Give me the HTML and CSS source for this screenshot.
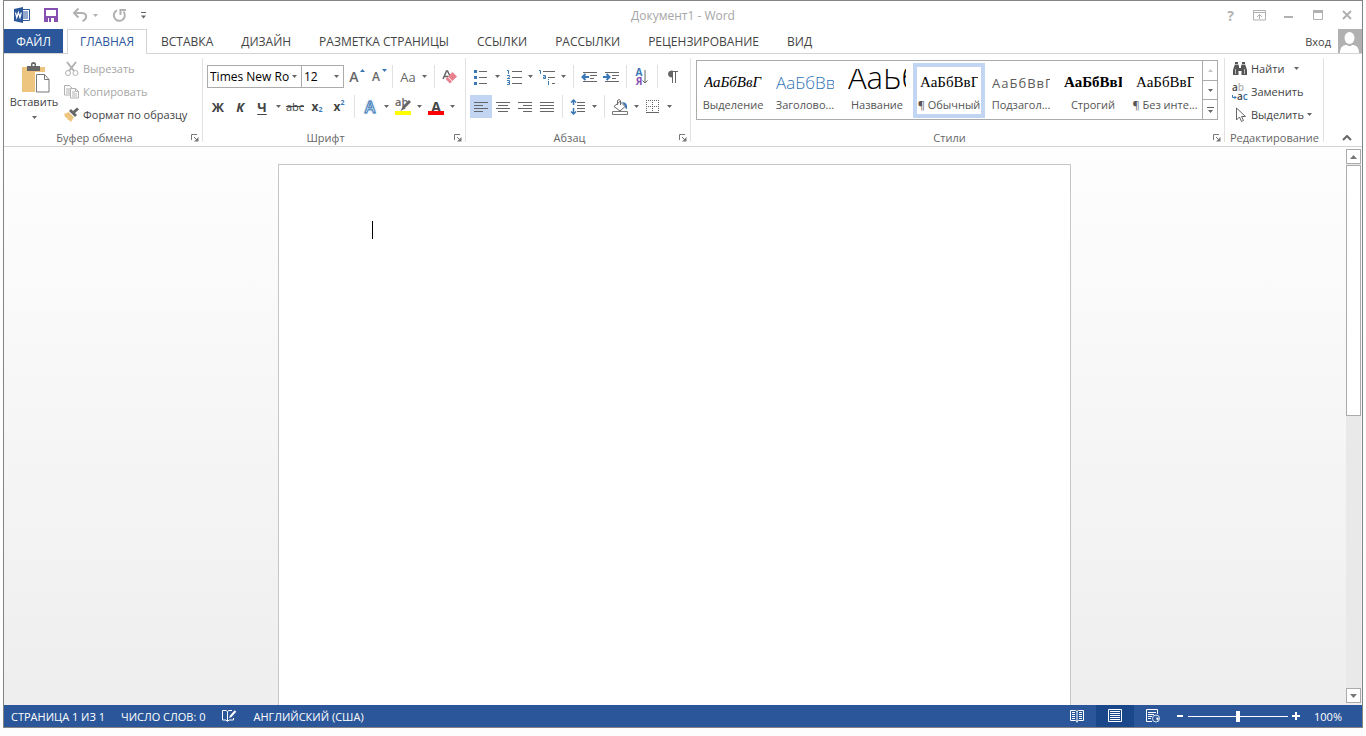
FILE: index.html
```html
<!DOCTYPE html>
<html lang="ru">

<head>
    <meta charset="UTF-8">
    <meta name="viewport" content="width=device-width, initial-scale=1.0">
    <title>Документ1 - Word</title>

    <link rel="stylesheet" href="styles.css">

</head>

<body>

    <!-- Shared shapes -->
    <svg class="defs" aria-hidden="true">
        <symbol id="arrow" viewBox="0 0 5 3"><path d="M0 0h5L2.500 3z" fill="currentColor" /></symbol>
        <symbol id="launcher" viewBox="0 0 8 8">
            <path d="M.5 6V.5H6M3 3l3 3" fill="none" stroke="currentColor" />
            <path d="M7.500 3v4.500H3z" fill="currentColor" />
        </symbol>
    </svg>

    <div class="window">

        <header class="titlebar">
            <div class="quick-access">
                <svg class="logo" viewBox="0 0 16 16" width="16" height="16">
                    <path d="M8.500 2.500h7v11h-7z" fill="#fff" stroke="#2b579a" />
                    <path d="M9 5h5M9 7h5M9 9h5M9 11h5" stroke="#2b579a" />
                    <path d="M0 2l9-2v16l-9-2z" fill="#2b579a" />
                    <path d="M1.500 5.500l1.300 5 1.600-5 1.600 5 1.300-5" fill="none" stroke="#fff" stroke-width="1.200" />
                </svg>
                <button class="qa-btn save" aria-label="Сохранить">
                    <svg viewBox="0 0 14 14" width="14" height="14">
                        <path d="M1 1h12v12H1z" fill="#fff" stroke="#8650b0" stroke-width="2" />
                        <path d="M1 8h12v5H1z" fill="#8650b0" />
                        <path d="M4 10h6v4H4z" fill="#fff" />
                        <path d="M5 10h2v4H5z" fill="#8650b0" />
                    </svg>
                </button>
                <button class="qa-btn undo" aria-label="Отменить">
                    <svg viewBox="0 0 16 14" width="16" height="14">
                        <path d="M6.500 .5L2 5l4.500 4.500M2 5h7.500c6 0 6 6 1 8" fill="none" stroke="#b1b1b1" stroke-width="2" />
                    </svg>
                    <svg class="arrow" width="5" height="3"><use href="#arrow" /></svg>
                </button>
                <button class="qa-btn redo" aria-label="Повторить">
                    <svg viewBox="0 0 15 15" width="15" height="15">
                        <path d="M5 2.300a5.500 5.500 0 1 0 6.500 1.400M8.500 7V2H14" fill="none" stroke="#b1b1b1" stroke-width="2" />
                    </svg>
                </button>
                <button class="qa-btn customize" aria-label="Настройка панели">
                    <svg viewBox="0 0 5 7" width="5" height="7">
                        <path d="M0 3.500h5L2.500 6.500z" fill="#666" />
                        <path d="M0 .5h5" stroke="#666" />
                    </svg>
                </button>
            </div>
            <h1 class="doc-title">Документ1 - Word</h1>
            <div class="window-buttons">
                <button class="help" aria-label="Справка">?</button>
                <button aria-label="Параметры ленты">
                    <svg viewBox="0 0 13 11" width="13" height="11">
                        <path d="M.5 .5h12v9.500H.5zM0 2.500h13M6.500 9V4.500M4 7l2.500-2.500L9 7" fill="none" stroke="#b1b1b1" />
                    </svg>
                </button>
                <button aria-label="Свернуть">
                    <svg viewBox="0 0 10 10" width="10" height="10"><path d="M0 7h9" stroke="#b1b1b1" stroke-width="2" /></svg>
                </button>
                <button aria-label="Развернуть">
                    <svg viewBox="0 0 10 10" width="10" height="10"><path d="M.5 1v8.500h9V1" fill="none" stroke="#b1b1b1" /><path d="M0 1.500h10" stroke="#b1b1b1" stroke-width="3" /></svg>
                </button>
                <button aria-label="Закрыть">
                    <svg viewBox="0 0 10 10" width="10" height="10"><path d="M1 1l8 8M9 1L1 9" stroke="#b1b1b1" stroke-width="2" /></svg>
                </button>
            </div>
        </header>

        <nav class="tabs">
            <button class="file-tab">ФАЙЛ</button>
            <button class="tab active">ГЛАВНАЯ</button>
            <button class="tab">ВСТАВКА</button>
            <button class="tab">ДИЗАЙН</button>
            <button class="tab">РАЗМЕТКА СТРАНИЦЫ</button>
            <button class="tab">ССЫЛКИ</button>
            <button class="tab">РАССЫЛКИ</button>
            <button class="tab">РЕЦЕНЗИРОВАНИЕ</button>
            <button class="tab">ВИД</button>
            <button class="login">
                Вход
                <svg viewBox="0 0 24 24" width="24" height="24">
                    <path d="M0 0h24v24H0z" fill="#b1b1b1" />
                    <ellipse cx="11.500" cy="9" rx="5" ry="6" fill="#fff" />
                    <path d="M2 24c0-6 3-8 6.500-8 2 1.500 4 1.500 6 0 3.500 0 6.500 2 6.500 8z" fill="#fff" />
                </svg>
            </button>
        </nav>

        <div class="ribbon">

            <!-- Clipboard -->
            <section class="group clipboard">
                <div class="group-body">
                    <button class="paste">
                        <svg viewBox="-4 0 34 32" width="34" height="32">
                            <path d="M1 5h23v25H1z" fill="#edc57e" />
                            <path d="M6 4h4V2q0-2 2.500-2T15 2v2h4v5H6z" fill="#666" />
                            <path d="M11.500 2h2v2h-2z" fill="#fff" />
                            <path d="M14 10h10l6 6v16H14z" fill="#fff" />
                            <path d="M15.500 12.500h8l4.500 5v12.500H15.500zM23.500 12.500v5H28" fill="#fff" stroke="#777" />
                        </svg>
                        <span>Вставить</span>
                        <svg class="arrow" width="5" height="3"><use href="#arrow" /></svg>
                    </button>
                    <div class="command-list">
                        <button class="command disabled">
                            <svg viewBox="0 0 16 16" width="16" height="16">
                                <path d="M3 1l7 9M12 1L5 10" stroke="#b1b1b1" stroke-width="2" />
                                <circle cx="4" cy="12" r="2.500" fill="none" stroke="#b1b1b1" />
                                <circle cx="11.500" cy="12" r="2.500" fill="none" stroke="#b1b1b1" />
                            </svg>
                            Вырезать
                        </button>
                        <button class="command disabled">
                            <svg viewBox="0 0 16 16" width="16" height="16">
                                <path d="M.5 1.500h5l2.500 2.500v7H.5zM2 5h4M2 7h4M2 9h4" fill="none" stroke="#b1b1b1" />
                                <path d="M6.500 4.500h5l3 3v6.500h-8zM11.500 4.500v3h3M8 8h3M8 10h5M8 12h5" fill="#fff" stroke="#b1b1b1" />
                            </svg>
                            Копировать
                        </button>
                        <button class="command">
                            <svg viewBox="0 0 16 16" width="16" height="16">
                                <path d="M0 7l5-2 5 5-3 5-2-2-1 0-1-2-2-1z" fill="#edc57e" />
                                <path d="M5 4l2-2 6 6-2 2z" fill="#666" />
                                <path d="M9.500 5.500L14 1.500" stroke="#666" stroke-width="3" />
                                <path d="M4.500 4.500l6 6" stroke="#fff" />
                            </svg>
                            Формат по образцу
                        </button>
                    </div>
                </div>
                <footer class="group-name">Буфер обмена
                    <button class="launcher" aria-label="Буфер обмена"><svg width="8" height="8"><use href="#launcher" /></svg></button>
                </footer>
            </section>

            <!-- Font -->
            <section class="group font">
                <div class="group-body rows">
                    <div class="row">
                        <div class="combo combo-name">
                            <select aria-label="Шрифт"><option>Times New Ro</option></select>
                            <svg class="arrow" width="5" height="3"><use href="#arrow" /></svg>
                        </div>
                        <div class="combo combo-size">
                            <select aria-label="Размер"><option>12</option></select>
                            <svg class="arrow" width="5" height="3"><use href="#arrow" /></svg>
                        </div>
                        <button class="icon-btn letter">A<svg class="mark" viewBox="0 0 5 3" width="5" height="3"><path d="M0 3h5L2.500 0z" fill="#3a78b5" /></svg></button>
                        <button class="icon-btn letter small">A<svg class="mark" viewBox="0 0 5 3" width="5" height="3"><path d="M0 0h5L2.500 3z" fill="#3a78b5" /></svg></button>
                        <span class="sep"></span>
                        <button class="icon-btn case">Aa</button>
                        <button class="drop" aria-label="Регистр"><svg class="arrow" width="5" height="3"><use href="#arrow" /></svg></button>
                        <span class="sep"></span>
                        <button class="icon-btn" aria-label="Удалить форматирование">
                            <svg viewBox="0 0 16 16" width="16" height="16">
                                <path d="M1 10L4.500 2h1L8 7M2.500 7.500h4" fill="none" stroke="#666" stroke-width="1.500" />
                                <path d="M10.500 3l4.500 4.500-4.500 4.500L6 7.500z" fill="#e8808f" />
                                <path d="M5.500 8l4.500 4.500-2 2-4.500-4.500z" fill="#e8808f" />
                            </svg>
                        </button>
                    </div>
                    <div class="row">
                        <button class="icon-btn bold">Ж</button>
                        <button class="icon-btn bold italic">К</button>
                        <button class="icon-btn bold underline">Ч</button>
                        <button class="drop" aria-label="Подчеркивание"><svg class="arrow" width="5" height="3"><use href="#arrow" /></svg></button>
                        <button class="icon-btn strike">abc</button>
                        <button class="icon-btn index">x<sub>2</sub></button>
                        <button class="icon-btn index">x<sup>2</sup></button>
                        <span class="sep"></span>
                        <button class="icon-btn effects">A</button>
                        <button class="drop" aria-label="Эффекты"><svg class="arrow" width="5" height="3"><use href="#arrow" /></svg></button>
                        <button class="icon-btn marker" aria-label="Цвет выделения">
                            <span>ab</span>
                            <svg viewBox="0 0 16 16" width="16" height="16">
                                <path d="M0 12h16v4H0z" fill="#ff0" />
                                <path d="M15 2l-7 7" stroke="#666" stroke-width="3" />
                                <path d="M8 7l2.500 2.500L5.500 12z" fill="#666" />
                            </svg>
                        </button>
                        <button class="drop" aria-label="Цвет выделения"><svg class="arrow" width="5" height="3"><use href="#arrow" /></svg></button>
                        <button class="icon-btn bold color">A</button>
                        <button class="drop" aria-label="Цвет текста"><svg class="arrow" width="5" height="3"><use href="#arrow" /></svg></button>
                    </div>
                </div>
                <footer class="group-name">Шрифт
                    <button class="launcher" aria-label="Шрифт"><svg width="8" height="8"><use href="#launcher" /></svg></button>
                </footer>
            </section>

            <!-- Paragraph -->
            <section class="group paragraph">
                <div class="group-body rows">
                    <div class="row">
                        <button class="icon-btn" aria-label="Маркеры">
                            <svg viewBox="0 0 16 16" width="16" height="16">
                                <path d="M1 1h3v3H1zM1 7h3v3H1zM1 13h3v3H1z" fill="#3a78b5" />
                                <path d="M6 2.500h8M6 8.500h8M6 14.500h8" stroke="#666" />
                            </svg>
                        </button>
                        <button class="drop" aria-label="Маркеры"><svg class="arrow" width="5" height="3"><use href="#arrow" /></svg></button>
                        <button class="icon-btn" aria-label="Нумерация">
                            <svg viewBox="0 0 16 16" width="16" height="16">
                                <path d="M1 1.500h1.500V5M1 6.500h2.500v1.500L1.500 9.500H4M1 11.500h2.500v4H1M1.500 13.500h2" fill="none" stroke="#3a78b5" />
                                <path d="M6 2.500h10M6 8.500h10M6 14.500h10" stroke="#666" />
                            </svg>
                        </button>
                        <button class="drop" aria-label="Нумерация"><svg class="arrow" width="5" height="3"><use href="#arrow" /></svg></button>
                        <button class="icon-btn" aria-label="Многоуровневый список">
                            <svg viewBox="0 0 16 16" width="16" height="16">
                                <path d="M0 1.500h1.500V5M4 6.500h2.500v3H4.500v-1.500H6M9.500 10v1M9.500 12v4" fill="none" stroke="#3a78b5" />
                                <path d="M4 2.500h12M9 8.500h7M13 14.500h3" stroke="#666" />
                            </svg>
                        </button>
                        <button class="drop" aria-label="Многоуровневый список"><svg class="arrow" width="5" height="3"><use href="#arrow" /></svg></button>
                        <span class="sep"></span>
                        <button class="icon-btn" aria-label="Уменьшить отступ">
                            <svg viewBox="0 0 16 16" width="16" height="16">
                                <path d="M2 3.500h14M9 6.500h7M9 9.500h4M2 12.500h14" stroke="#666" />
                                <path d="M8 8H1.500M4.500 5l-3 3 3 3" fill="none" stroke="#3a78b5" stroke-width="2" />
                            </svg>
                        </button>
                        <button class="icon-btn" aria-label="Увеличить отступ">
                            <svg viewBox="0 0 16 16" width="16" height="16">
                                <path d="M2 3.500h14M9 6.500h7M9 9.500h4M2 12.500h14" stroke="#666" />
                                <path d="M0 8h6.500M3.500 5l3 3-3 3" fill="none" stroke="#3a78b5" stroke-width="2" />
                            </svg>
                        </button>
                        <span class="sep"></span>
                        <button class="icon-btn sort" aria-label="Сортировка">
                            <span class="sort-letters"><b>А</b><b>Я</b></span>
                            <svg viewBox="0 0 6 16" width="6" height="16"><path d="M3 1v13M.5 11.500L3 14l2.500-2.500" fill="none" stroke="#666" /></svg>
                        </button>
                        <span class="sep"></span>
                        <button class="icon-btn pilcrow" aria-label="Отобразить все знаки">
                            <svg viewBox="0 0 12 14" width="12" height="14">
                                <path d="M5.500 1H4.500a3 3 0 0 0 0 6h1z" fill="#666" stroke="#666" />
                                <path d="M4 1.500h7M5.500 1v12M8.500 1v12" fill="none" stroke="#666" />
                            </svg>
                        </button>
                    </div>
                    <div class="row">
                        <button class="icon-btn pressed" aria-label="По левому краю">
                            <svg viewBox="0 0 16 16" width="16" height="16"><path d="M1 3.500h14M1 6.500h9M1 9.500h14M1 12.500h9" stroke="#666" /></svg>
                        </button>
                        <button class="icon-btn" aria-label="По центру">
                            <svg viewBox="0 0 16 16" width="16" height="16"><path d="M1 3.500h14M3 6.500h10M1 9.500h14M3 12.500h10" stroke="#666" /></svg>
                        </button>
                        <button class="icon-btn" aria-label="По правому краю">
                            <svg viewBox="0 0 16 16" width="16" height="16"><path d="M1 3.500h14M6 6.500h9M1 9.500h14M6 12.500h9" stroke="#666" /></svg>
                        </button>
                        <button class="icon-btn" aria-label="По ширине">
                            <svg viewBox="0 0 16 16" width="16" height="16"><path d="M1 3.500h14M1 6.500h14M1 9.500h14M1 12.500h14" stroke="#666" /></svg>
                        </button>
                        <span class="sep"></span>
                        <button class="icon-btn" aria-label="Интервал">
                            <svg viewBox="0 0 16 16" width="16" height="16">
                                <path d="M7 3.500h8M7 6.500h8M7 9.500h8M7 12.500h8" stroke="#666" />
                                <path d="M3.500 1v5M3.500 9v6M1 3.500L3.500 1 6 3.500M1 12.500L3.500 15 6 12.500" fill="none" stroke="#3a78b5" stroke-width="1.500" />
                            </svg>
                        </button>
                        <button class="drop" aria-label="Интервал"><svg class="arrow" width="5" height="3"><use href="#arrow" /></svg></button>
                        <span class="sep"></span>
                        <button class="icon-btn" aria-label="Заливка">
                            <svg viewBox="0 0 18 16" width="18" height="16">
                                <path d="M11 3q6 0 5 7-2 0-2-3z" fill="#3a78b5" />
                                <path d="M9 2.500l5 5-5 4.500-6-4.500zM6.500 6V1.500q1.500-2 3 0V6" fill="#fff" stroke="#666" />
                                <path d="M1.500 12.500h15v3h-15z" fill="#fff" stroke="#777" />
                            </svg>
                        </button>
                        <button class="drop" aria-label="Заливка"><svg class="arrow" width="5" height="3"><use href="#arrow" /></svg></button>
                        <button class="icon-btn" aria-label="Границы">
                            <svg viewBox="0 0 14 14" width="14" height="14">
                                <path d="M0 .5h13M0 6.500h13M.5 0v12M6.500 0v12M12.500 0v12" stroke="#666" stroke-dasharray="1 1" />
                                <path d="M0 12.500h13" stroke="#666" />
                            </svg>
                        </button>
                        <button class="drop" aria-label="Границы"><svg class="arrow" width="5" height="3"><use href="#arrow" /></svg></button>
                    </div>
                </div>
                <footer class="group-name">Абзац
                    <button class="launcher" aria-label="Абзац"><svg width="8" height="8"><use href="#launcher" /></svg></button>
                </footer>
            </section>

            <!-- Styles -->
            <section class="group styles">
                <div class="group-body">
                    <div class="gallery">
                        <button class="style"><span class="preview emphasis">АаБбВвГ</span><span class="style-name">Выделение</span></button>
                        <button class="style"><span class="preview heading">АаБбВвГ</span><span class="style-name">Заголово...</span></button>
                        <button class="style"><span class="preview title">АаБбВ</span><span class="style-name">Название</span></button>
                        <button class="style selected"><span class="preview">АаБбВвГ</span><span class="style-name">¶ Обычный</span></button>
                        <button class="style"><span class="preview subtitle">АаБбВвГ</span><span class="style-name">Подзагол...</span></button>
                        <button class="style"><span class="preview strong">АаБбВвГ</span><span class="style-name">Строгий</span></button>
                        <button class="style"><span class="preview">АаБбВвГ</span><span class="style-name">¶ Без инте...</span></button>
                        <div class="gallery-scroll">
                            <button class="up" aria-label="Вверх"><svg viewBox="0 0 5 3" width="5" height="3"><path d="M0 3h5L2.500 0z" fill="#c6c6c6" /></svg></button>
                            <button aria-label="Вниз"><svg class="arrow" width="5" height="3"><use href="#arrow" /></svg></button>
                            <button aria-label="Все стили"><svg viewBox="0 0 7 6" width="7" height="6"><path d="M0 .5h7" stroke="#666" /><path d="M1 3h5L3.500 6z" fill="#666" /></svg></button>
                        </div>
                    </div>
                </div>
                <footer class="group-name">Стили
                    <button class="launcher" aria-label="Стили"><svg width="8" height="8"><use href="#launcher" /></svg></button>
                </footer>
            </section>

            <!-- Editing -->
            <section class="group editing">
                <div class="group-body">
                    <div class="command-list">
                        <button class="command">
                            <svg viewBox="0 0 16 16" width="16" height="16">
                                <path d="M3 1h3v2l1 2v2h2V5l1-2V1h3v2l2 6v5H9.500V10h-3v4H1V9l2-6z" fill="#555" />
                                <path d="M3 3.500h3M10 3.500h3M3.500 8v5M12.500 8v5" stroke="#fff" stroke-width=".6" />
                            </svg>
                            Найти
                            <svg class="arrow far" width="5" height="3"><use href="#arrow" /></svg>
                        </button>
                        <button class="command">
                            <span class="replace-icon"><b>a<i>b</i></b><b class="second">a<em>c</em></b>
                                <svg viewBox="0 0 5 5" width="5" height="5"><path d="M.5 0v2.500H4M2.500 1L4 2.500 2.500 4" fill="none" stroke="#3a78b5" /></svg>
                            </span>
                            Заменить
                        </button>
                        <button class="command">
                            <svg viewBox="0 0 16 16" width="16" height="16">
                                <path d="M4.500 1v12l3-3 2 4.500 2-1-2-4h4z" fill="#fff" stroke="#666" />
                            </svg>
                            Выделить
                            <svg class="arrow" width="5" height="3"><use href="#arrow" /></svg>
                        </button>
                    </div>
                </div>
                <footer class="group-name">Редактирование</footer>
            </section>

            <button class="collapse" aria-label="Свернуть ленту">
                <svg viewBox="0 0 10 6" width="10" height="6"><path d="M1 5l4-4 4 4" fill="none" stroke="#666" stroke-width="2" /></svg>
            </button>
        </div>

        <main class="workspace">
            <div class="canvas">
                <div class="page"><span class="caret"></span></div>
            </div>
            <div class="scrollbar">
                <button aria-label="Прокрутить вверх"><svg viewBox="0 0 7 4" width="7" height="4"><path d="M0 4h7L3.500 0z" fill="#777" /></svg></button>
                <div class="track"><div class="thumb"></div></div>
                <button aria-label="Прокрутить вниз"><svg viewBox="0 0 7 4" width="7" height="4"><path d="M0 0h7L3.500 4z" fill="#777" /></svg></button>
            </div>
        </main>

        <footer class="statusbar">
            <span>СТРАНИЦА 1 ИЗ 1</span>
            <span>ЧИСЛО СЛОВ: 0</span>
            <svg viewBox="0 0 16 14" width="16" height="14">
                <path d="M6.500 2.500L5 1.500H1.500v9.500H5l1.500 1.500L8 11h4.500V9M6.500 2.500V12M6.500 2.500L8 1.500h3" fill="none" stroke="#fff" />
                <path d="M14.500 2L9.500 7.500" fill="none" stroke="#fff" stroke-width="2" />
                <path d="M9 6.500l1.500 1.500L8 9z" fill="#fff" />
            </svg>
            <span>АНГЛИЙСКИЙ (США)</span>
            <div class="views">
                <button aria-label="Режим чтения">
                    <svg viewBox="0 0 14 14" width="14" height="14">
                        <path d="M7 2.500L5.500 1.500h-5v10h5L7 12.500l1.500-1h5v-10h-5zM7 2.500v11M2 3.500h3M2 5.500h3M2 7.500h3M2 9.500h3M9 3.500h3M9 5.500h3M9 7.500h3M9 9.500h3" fill="none" stroke="#fff" />
                    </svg>
                </button>
                <button class="current" aria-label="Разметка страницы">
                    <svg viewBox="0 0 14 14" width="14" height="14">
                        <path d="M.5 .5h13v12H.5zM2 2.500h10M2 4.500h10M2 6.500h10M2 8.500h10M2 10.500h10" fill="none" stroke="#fff" />
                    </svg>
                </button>
                <button aria-label="Веб-документ">
                    <svg viewBox="0 0 15 14" width="15" height="14">
                        <path d="M6 12.500H.5V.5h11V5M2 3.500h8M2 5.500h6M2 7.500h4M2 9.500h3" fill="none" stroke="#fff" />
                        <circle cx="10" cy="9.500" r="3.500" fill="#2b579a" stroke="#dfe8f5" />
                        <path d="M8 7l3 1-1 2 2 2 1-3" fill="#dfe8f5" />
                    </svg>
                </button>
            </div>
            <div class="zoom">
                <button aria-label="Уменьшить"><svg viewBox="0 0 8 8" width="8" height="8"><path d="M1 4h6" stroke="#fff" stroke-width="2" /></svg></button>
                <input type="range" min="0" max="100" value="50" aria-label="Масштаб">
                <button aria-label="Увеличить"><svg viewBox="0 0 8 8" width="8" height="8"><path d="M0 4h8M4 0v8" stroke="#fff" stroke-width="2" /></svg></button>
                <span class="percent">100%</span>
            </div>
        </footer>

    </div>

</body>

</html>
```
FILE: styles.css
```css
* {
    box-sizing: border-box;
}

body {
    margin: 0;
    padding: 0 3px 8px;
    height: 100vh;
    background-color: #fdfdfd;
    color: #444;
    font-family: "Open Sans", "Noto Sans", sans-serif;
    font-size: 12px;
}

button {
    display: flex;
    align-items: center;
    justify-content: center;
    padding: 0;
    border: none;
    background: none;
    color: inherit;
    font: inherit;
    white-space: nowrap;
}

svg {
    flex: none;
}

.defs {
    position: absolute;
    width: 0;
    height: 0;
}

.arrow {
    color: #666;
}

.window {
    display: flex;
    flex-direction: column;
    height: 100%;
    border: 1px solid #848484;
    background-color: #fff;
}

/* Title bar */
.titlebar {
    display: grid;
    grid-template-columns: 1fr auto 1fr;
    align-items: center;
    height: 28px;
}

.quick-access {
    display: flex;
    align-items: center;
    padding-left: 10px;
}

.qa-btn {
    gap: 5px;
    margin-left: 14px;
}

.undo .arrow {
    color: #b1b1b1;
}

.doc-title {
    margin: 0;
    color: #a6a6a6;
    font-size: 12px;
    font-weight: normal;
}

.window-buttons {
    display: flex;
    justify-content: flex-end;
    padding-right: 1px;
}

.window-buttons button {
    width: 29px;
    height: 20px;
}

.help {
    color: #b1b1b1;
    font-size: 14px;
    font-weight: bold;
}

/* Tabs */
.tabs {
    display: flex;
    height: 25px;
    border-bottom: 1px solid #d4d4d4;
}

.file-tab {
    width: 59px;
    margin-right: 4px;
    background-color: #2b579a;
    color: #fff;
}

.tab {
    padding: 0 13px;
    border: 1px solid transparent;
    border-bottom: none;
}

.tab.active {
    margin-bottom: -1px;
    padding: 0 12px 2px;
    border-color: #d4d4d4;
    background-color: #fff;
    color: #2b579a;
}

.login {
    gap: 7px;
    margin-left: auto;
    font-size: 11px;
}

/* Ribbon */
.ribbon {
    display: flex;
    height: 93px;
    border-bottom: 1px solid #d4d4d4;
}

.group {
    position: relative;
    display: flex;
    flex-direction: column;
    padding: 3px 4px 0;
}

.group::after {
    content: "";
    position: absolute;
    top: 4px;
    right: 0;
    bottom: 4px;
    width: 1px;
    background-color: #e1e1e1;
}

.clipboard {
    width: 199px;
}

.font {
    width: 263px;
}

.paragraph {
    width: 225px;
}

.styles {
    flex: 1;
    min-width: 0;
    padding-left: 5px;
}

.editing {
    width: 99px;
}

.group-body {
    display: flex;
    flex: 1;
}

.group-name {
    display: flex;
    align-items: center;
    justify-content: center;
    height: 17px;
    padding-right: 18px;
    color: #666;
    font-size: 11px;
}

.editing .group-name {
    padding-right: 0;
}

.launcher {
    position: absolute;
    right: 4px;
    color: #777;
}

.paste {
    flex-direction: column;
    justify-content: flex-start;
    width: 52px;
    padding-top: 5px;
    font-size: 11px;
}

.paste .arrow {
    margin-top: 7px;
}

.command-list {
    display: flex;
    flex-direction: column;
    padding-left: 4px;
}

.editing .command-list {
    padding-left: 3px;
}

.command {
    justify-content: flex-start;
    gap: 3px;
    height: 23px;
    font-size: 11px;
}

.disabled {
    color: #a6a6a6;
}

.rows {
    flex-direction: column;
    gap: 7px;
    padding-top: 8px;
}

.row {
    display: flex;
    height: 23px;
}

.icon-btn {
    position: relative;
    width: 22px;
    color: #666;
}

.drop {
    width: 11px;
}

.sep {
    width: 1px;
    margin: 0 4px;
    background-color: #e1e1e1;
}

.pressed {
    background-color: #c2d5f2;
}

.combo {
    position: relative;
    color: #000;
}

.combo select {
    width: 100%;
    height: 23px;
    padding: 0 12px 0 2px;
    border: 1px solid #ababab;
    border-radius: 0;
    appearance: none;
    background-color: #fff;
    color: inherit;
    font: inherit;
}

.combo .arrow {
    position: absolute;
    top: 10px;
    right: 5px;
}

.combo-name {
    width: 95px;
}

.combo-size {
    width: 43px;
    margin-left: -1px;
}

.letter {
    padding-right: 2px;
    font-size: 14px;
    font-weight: 600;
}

.letter.small {
    font-size: 12px;
}

.mark {
    position: absolute;
    top: 4px;
    right: 1px;
}

.case {
    font-size: 13px;
}

.bold {
    color: #444;
    font-size: 13px;
    font-weight: bold;
}

.italic {
    font-style: italic;
}

.underline {
    text-decoration: underline;
    text-underline-offset: 2px;
}

.strike {
    font-size: 11px;
    text-decoration: line-through;
    color: #444;
}

.index {
    color: #444;
    font-weight: bold;
}

.index sub,
.index sup {
    color: #3a78b5;
    font-size: 7px;
    line-height: 8px;
}

.index sub {
    align-self: flex-end;
    margin-bottom: 4px;
}

.index sup {
    align-self: flex-start;
    margin-top: 4px;
}

.effects {
    color: #fff;
    font-size: 16px;
    font-weight: 600;
    -webkit-text-stroke: 1px #3a78b5;
    text-shadow: 0 0 3px #8db8e6;
}

.marker span {
    position: absolute;
    top: 1px;
    left: 3px;
    font-size: 11px;
    font-weight: 600;
    line-height: 12px;
}

.color {
    font-size: 14px;
    line-height: 16px;
}

.color::after {
    content: "";
    position: absolute;
    right: 3px;
    bottom: 3px;
    left: 3px;
    height: 4px;
    background-color: #f00;
}

.sort-letters {
    display: flex;
    flex-direction: column;
    color: #3a78b5;
    font-size: 10px;
    line-height: 9px;
}

.sort-letters b + b {
    color: #8650b0;
}

/* Styles gallery */
.gallery {
    display: flex;
    flex: 1;
    height: 60px;
    margin-top: 3px;
    margin-right: 3px;
    border: 1px solid #ababab;
}

.style {
    flex-direction: column;
    justify-content: flex-start;
    width: 72px;
    margin: 2px 0 1px;
    border: 4px solid transparent;
}

.style.selected {
    border-color: #c2d5f2;
}

.preview {
    display: flex;
    align-items: center;
    width: 58px;
    height: 28px;
    margin-top: 2px;
    overflow: hidden;
    color: #000;
    font-family: "Liberation Serif", serif;
    font-size: 15px;
}

.emphasis {
    font-style: italic;
}

.heading {
    color: #2e74b5;
    font-family: "Open Sans", sans-serif;
    font-size: 17px;
    font-weight: 300;
}

.title {
    align-items: flex-start;
    font-family: "Open Sans", sans-serif;
    font-size: 31px;
    font-weight: 300;
    line-height: 16px;
}

.subtitle {
    color: #5a5a5a;
    font-family: "Open Sans", sans-serif;
    font-size: 13px;
    letter-spacing: 1px;
}

.strong {
    font-weight: bold;
}

.style-name {
    color: #555;
    font-size: 11px;
    line-height: 18px;
}

.gallery-scroll {
    display: flex;
    flex-direction: column;
    width: 15px;
    margin-left: auto;
    border-left: 1px solid #ababab;
}

.gallery-scroll button {
    flex: 1;
    border-top: 1px solid #ababab;
}

.gallery-scroll .up {
    border-top: none;
}

.far {
    margin-left: 7px;
}

.replace-icon {
    position: relative;
    width: 16px;
    height: 18px;
    font-size: 10px;
    line-height: 9px;
    text-align: left;
}

.replace-icon b {
    display: block;
    font-weight: 600;
}

.replace-icon i {
    color: #b1b1b1;
    font-style: normal;
}

.replace-icon em {
    color: #3a78b5;
    font-style: normal;
}

.replace-icon .second {
    padding-left: 5px;
}

.replace-icon svg {
    position: absolute;
    bottom: 1px;
    left: 0;
}

.collapse {
    align-self: flex-end;
    width: 38px;
    height: 17px;
    padding-left: 8px;
}

/* Document */
.workspace {
    display: flex;
    flex: 1;
    min-height: 0;
    background-image: linear-gradient(#fefefe, #eee);
}

.canvas {
    flex: 1;
    padding-top: 17px;
    overflow: hidden;
}

.page {
    width: 793px;
    height: 1123px;
    margin: 0 auto;
    padding: 56px 93px;
    border: 1px solid #c6c6c6;
    background-color: #fff;
}

.caret {
    display: block;
    width: 1px;
    height: 18px;
    background-color: #000;
}

.scrollbar {
    display: flex;
    flex-direction: column;
    width: 17px;
    padding: 2px 1px;
}

.scrollbar button {
    height: 15px;
    border: 1px solid #ababab;
    background-color: #fff;
}

.track {
    flex: 1;
    padding: 1px 0;
    background-color: #e9e9e9;
}

.thumb {
    height: 48%;
    border: 1px solid #ababab;
    background-color: #fff;
}

/* Status bar */
.statusbar {
    display: flex;
    align-items: center;
    height: 22px;
    padding-left: 7px;
    background-color: #2b579a;
    color: #fff;
    font-size: 11px;
}

.statusbar > span,
.statusbar > svg {
    margin-right: 16px;
}

.views {
    display: flex;
    align-self: stretch;
    margin-left: auto;
}

.views button {
    width: 38px;
}

.views .current {
    background-color: #19478a;
}

.zoom {
    display: flex;
    align-items: center;
    gap: 4px;
    padding: 0 20px 0 4px;
}

.zoom input {
    width: 100px;
    height: 12px;
    margin: 0;
    appearance: none;
    background: linear-gradient(#fff, #fff) center / 100% 1px no-repeat;
}

.zoom input::-webkit-slider-thumb {
    width: 4px;
    height: 11px;
    appearance: none;
    background-color: #fff;
}

.percent {
    margin-left: 10px;
}
```
